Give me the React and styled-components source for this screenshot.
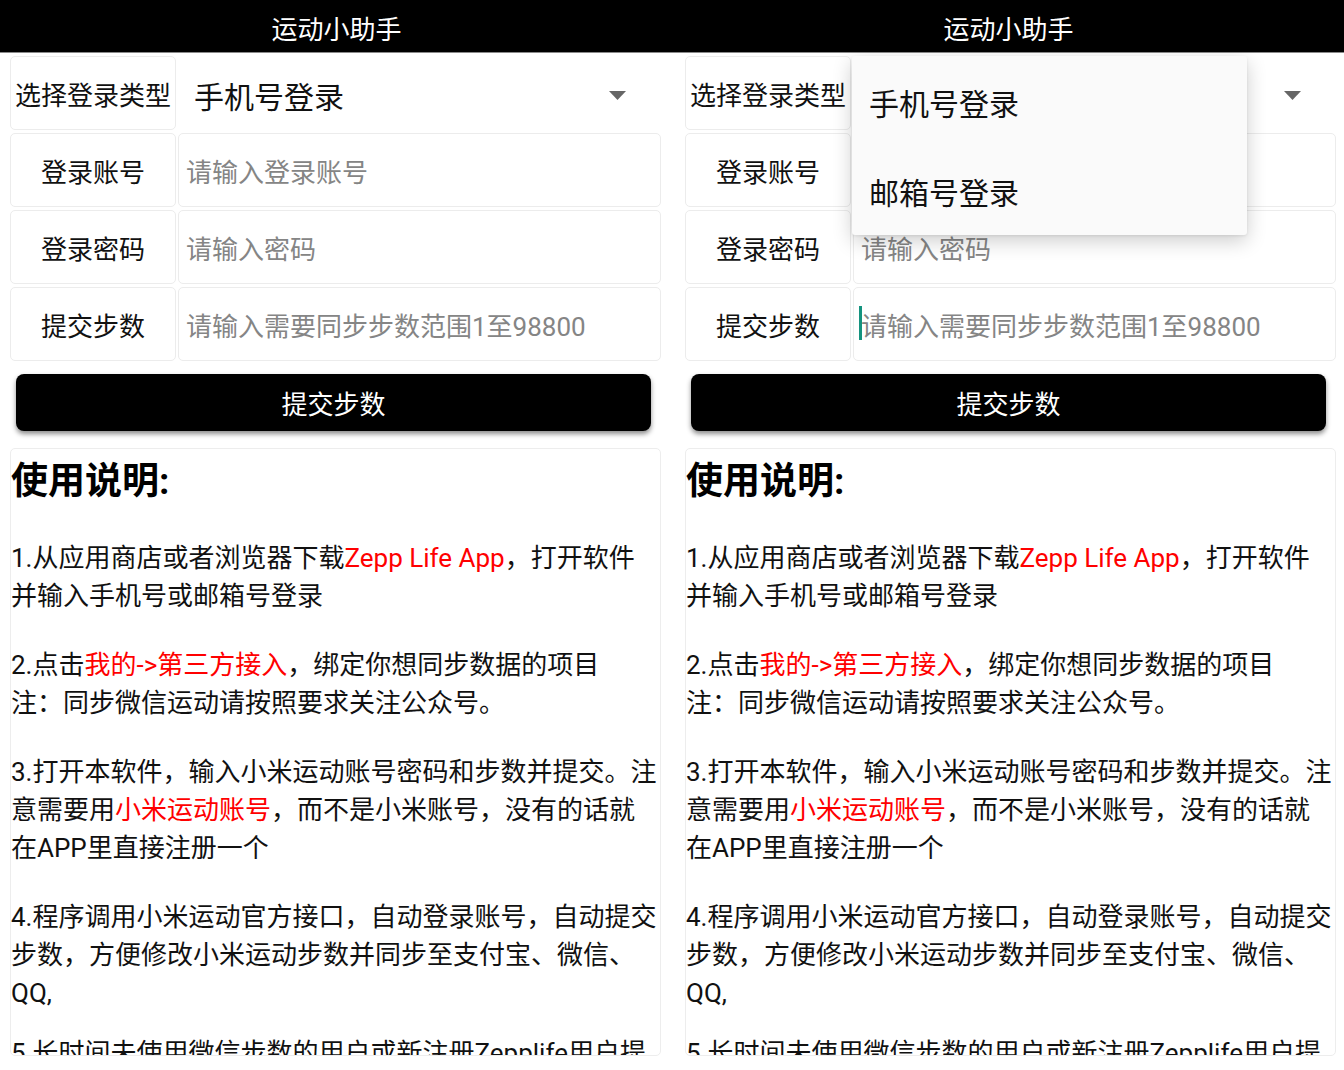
import React from 'react';
import styled, { createGlobalStyle } from 'styled-components';

const GlobalStyle = createGlobalStyle`
  html, body {
    margin: 0;
    padding: 0;
    background: #fff;
    overflow: hidden;
  }
  body {
    font-family: Roboto, "Noto Sans CJK SC", sans-serif;
    color: #111;
  }
`;

const Screen = styled.div`
  display: grid;
  grid-template-columns: 673px 671px;
  width: 1344px;
  height: 1070px;
  overflow: hidden;
`;

const Phone = styled.div`
  display: flex;
  flex-direction: column;
  height: 1056px;
  min-width: 0;
`;

const TitleBar = styled.header`
  flex-shrink: 0;
  height: 53px;
  padding-top: 2px;
  box-sizing: border-box;
  background: #000;
  border-bottom: 1px solid #8a8a8a;
  display: flex;
  align-items: center;
  justify-content: center;
  color: #fff;
  font-size: 26px;
`;

const Content = styled.main`
  flex: 1;
  min-height: 0;
  display: flex;
  flex-direction: column;
  padding: ${p => (p.$right ? '3px 8px 0 12px' : '3px 12px 0 10px')};
`;

const Form = styled.div`
  display: flex;
  flex-direction: column;
  gap: 3px;
`;

const Row = styled.div`
  position: relative;
  display: grid;
  grid-template-columns: 166px 1fr;
  gap: 2px;
  height: 74px;
`;

const Cell = styled.div`
  display: flex;
  align-items: center;
  box-sizing: border-box;
  background: #fff;
  border: 1px solid #ececec;
  border-radius: 5px;
  font-size: 26px;
`;

const LabelCell = styled(Cell)`
  justify-content: center;
  color: #111;
`;

const InputCell = styled(Cell)`
  position: relative;
  padding-left: 7px;
  color: #858585;
`;

const SelectCell = styled.div`
  display: flex;
  align-items: center;
  justify-content: space-between;
  padding: 4px 35px 0 16px;
  font-size: 30px;
  color: #111;
`;

const Caret = styled.span`
  position: absolute;
  left: 5px;
  top: 18px;
  width: 3px;
  height: 34px;
  background: #14937f;
`;

const Menu = styled.div`
  position: absolute;
  left: 167px;
  top: 0;
  z-index: 2;
  width: 395px;
  height: 179px;
  display: flex;
  flex-direction: column;
  background: #fafafa;
  border-radius: 3px;
  box-shadow: 0 6px 20px rgba(0, 0, 0, 0.2), 0 1px 3px rgba(0, 0, 0, 0.08);
`;

const MenuItem = styled.div`
  flex: 1;
  display: flex;
  align-items: center;
  padding: 2px 0 0 17px;
  font-size: 30px;
  color: #111;
`;

const SubmitButton = styled.button`
  height: 57px;
  margin: 13px 10px 0 6px;
  border: none;
  border-radius: 8px;
  background: #000;
  color: #fff;
  font-family: inherit;
  font-size: 26px;
  box-shadow: 0 3px 5px rgba(0, 0, 0, 0.45);
`;

const Guide = styled.section`
  flex: 1;
  min-height: 0;
  margin-top: 17px;
  overflow: hidden;
  border: 1px solid #ededed;
  border-radius: 5px;
`;

const GuideTitle = styled.h2`
  margin: 9px 0 0;
  font-size: 37px;
  line-height: 48px;
  font-weight: bold;
  color: #000;
`;

const Para = styled.p`
  margin: ${p => p.$gap}px 0 0;
  font-size: 26px;
  line-height: 38px;
  color: #111;
`;

const Mark = styled.span`
  color: #ff0000;
`;

const Arrow = () => (
  <svg width="17" height="9" viewBox="0 0 17 9">
    <path d="M0 0h17L8.5 9z" fill="#666" />
  </svg>
);

const fields = [
  { label: '登录账号', hint: '请输入登录账号' },
  { label: '登录密码', hint: '请输入密码' },
  { label: '提交步数', hint: '请输入需要同步步数范围1至98800', focus: true },
];

function StepHelper({ menuOpen }) {
  return (
    <Phone>
      <TitleBar>运动小助手</TitleBar>
      <Content $right={menuOpen}>
        <Form>
          <Row>
            <LabelCell>选择登录类型</LabelCell>
            <SelectCell>
              <span>手机号登录</span>
              <Arrow />
            </SelectCell>
            {menuOpen && (
              <Menu>
                <MenuItem>手机号登录</MenuItem>
                <MenuItem>邮箱号登录</MenuItem>
              </Menu>
            )}
          </Row>
          {fields.map(f => (
            <Row key={f.label}>
              <LabelCell>{f.label}</LabelCell>
              <InputCell>
                {menuOpen && f.focus && <Caret />}
                {f.hint}
              </InputCell>
            </Row>
          ))}
        </Form>
        <SubmitButton>提交步数</SubmitButton>
        <Guide>
          <GuideTitle>使用说明:</GuideTitle>
          <Para $gap={33}>
            1.从应用商店或者浏览器下载<Mark>Zepp Life App</Mark>，打开软件并输入手机号或邮箱号登录
          </Para>
          <Para $gap={31}>
            2.点击<Mark>我的-&gt;第三方接入</Mark>，绑定你想同步数据的项目
            <br />
            注：同步微信运动请按照要求关注公众号。
          </Para>
          <Para $gap={31}>
            3.打开本软件，输入小米运动账号密码和步数并提交。注意需要用<Mark>小米运动账号</Mark>，而不是小米账号，没有的话就在APP里直接注册一个
          </Para>
          <Para $gap={31}>
            4.程序调用小米运动官方接口，自动登录账号，自动提交步数，方便修改小米运动步数并同步至支付宝、微信、QQ,
          </Para>
          <Para $gap={22}>
            5.长时间未使用微信步数的用户或新注册Zepplife用户提交步数前，请先在APP中手动同步一次数据
          </Para>
        </Guide>
      </Content>
    </Phone>
  );
}

export default function App() {
  return (
    <>
      <GlobalStyle />
      <Screen>
        <StepHelper />
        <StepHelper menuOpen />
      </Screen>
    </>
  );
}
